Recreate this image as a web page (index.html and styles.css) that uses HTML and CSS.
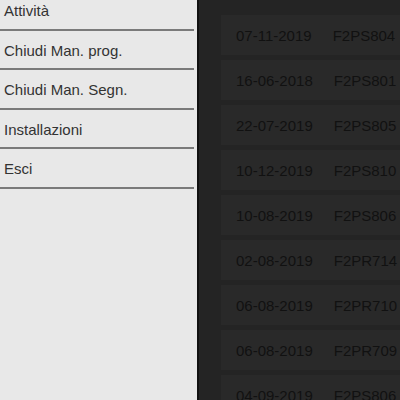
FILE: index.html
```html
<!DOCTYPE html>
<html lang="it">
<head>
    <meta charset="UTF-8">
    <meta name="viewport" content="width=device-width, initial-scale=1.0">
    <title>Interventi</title>
    <link rel="stylesheet" href="styles.css">
</head>
<body>

<div class="layout">
    <nav class="sideMenu">
        <ul class="menuList">
            <li class="menuItem">Attività</li>
            <li class="menuItem">Chiudi Man. prog.</li>
            <li class="menuItem">Chiudi Man. Segn.</li>
            <li class="menuItem">Installazioni</li>
            <li class="menuItem">Esci</li>
        </ul>
    </nav>

    <main class="content">
        <div class="rowList">
            <div class="row"><span class="date">07-11-2019</span><span class="code">F2PS804</span></div>
            <div class="row"><span class="date">16-06-2018</span><span class="code">F2PS801</span></div>
            <div class="row"><span class="date">22-07-2019</span><span class="code">F2PS805</span></div>
            <div class="row"><span class="date">10-12-2019</span><span class="code">F2PS810</span></div>
            <div class="row"><span class="date">10-08-2019</span><span class="code">F2PS806</span></div>
            <div class="row"><span class="date">02-08-2019</span><span class="code">F2PR714</span></div>
            <div class="row"><span class="date">06-08-2019</span><span class="code">F2PR710</span></div>
            <div class="row"><span class="date">06-08-2019</span><span class="code">F2PR709</span></div>
            <div class="row"><span class="date">04-09-2019</span><span class="code">F2PS806</span></div>
        </div>
    </main>
</div>

</body>
</html>
```

FILE: styles.css
```css
body {
    font-family: "Liberation Sans", Arial, sans-serif;
    margin: 0;
    padding: 0;
    background-color: #242424;
    overflow: hidden;
}

.layout {
    display: flex;
    height: 400px;
}

.sideMenu {
    width: 197px;
    flex-shrink: 0;
    background-color: #e8e8e8;
    border-right: 2px solid #111111;
}

.menuList {
    list-style: none;
    margin: -9px 0 0 0;
    padding: 0;
    width: 194px;
}

.menuItem {
    height: 37.5px;
    line-height: 39px;
    padding-left: 4px;
    font-size: 15px;
    color: #333333;
    border-bottom: 2px solid #7a7a7a;
}

.content {
    flex: 1;
    overflow: hidden;
}

.rowList {
    margin: 15px 0 0 22px;
    display: flex;
    flex-direction: column;
    gap: 5px;
}

.row {
    height: 40px;
    display: flex;
    align-items: center;
    gap: 19px;
    padding-left: 15px;
    background-color: #292929;
    font-size: 15px;
    color: #111111;
    white-space: nowrap;
}

.code {
    margin-left: 2px;
}
```
